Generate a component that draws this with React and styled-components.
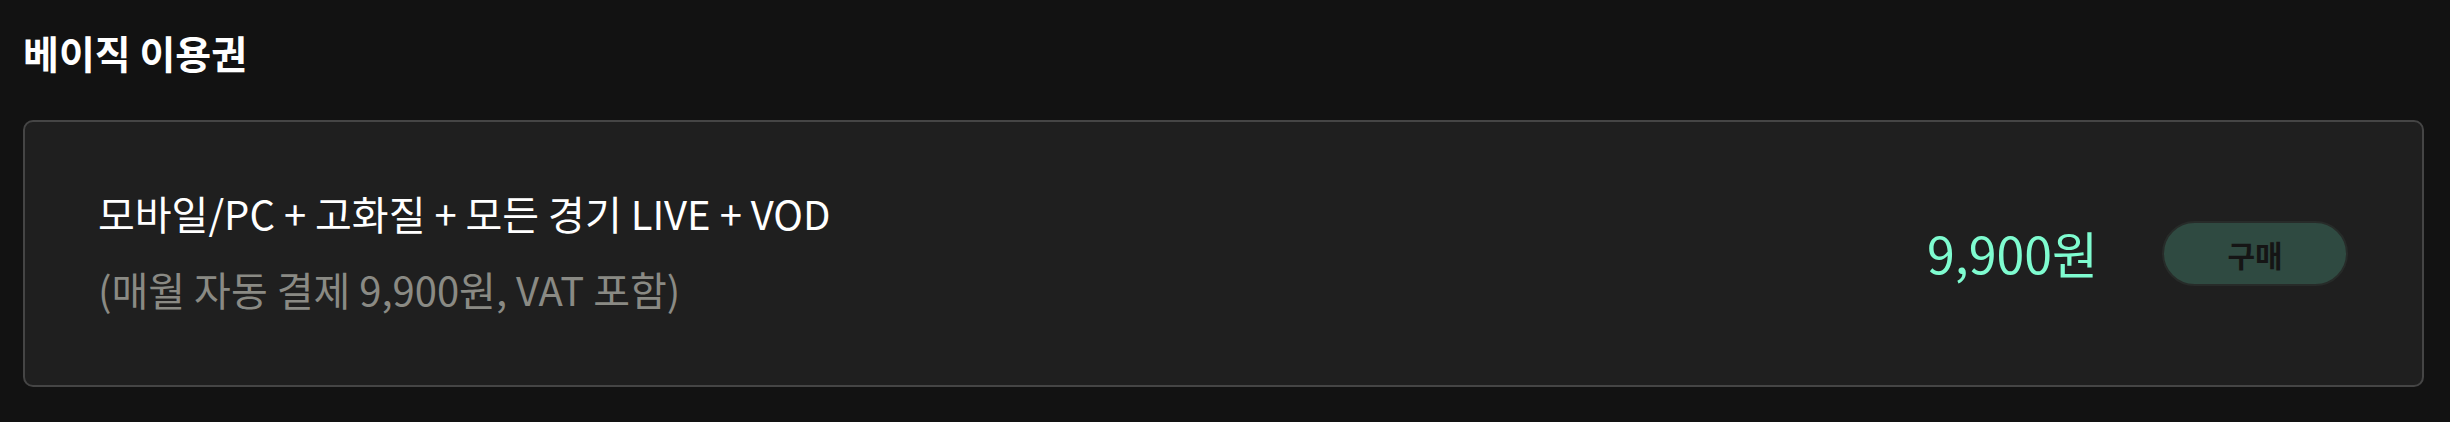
import React from "react";
import styled, { createGlobalStyle } from "styled-components";

const GlobalStyle = createGlobalStyle`
  html, body {
    margin: 0;
    padding: 0;
    background: #121212;
  }
  body {
    font-family: "Noto Sans CJK KR", "Noto Sans", sans-serif;
    color: #fff;
  }
`;

const PageWrapper = styled.div`
  padding: 26px 26px 34px 23px;
`;

const Title = styled.h2`
  margin: 0 0 42px;
  font-size: 39px;
  line-height: 52px;
  font-weight: 700;
  color: #fff;
`;

const PlanCard = styled.div`
  box-sizing: border-box;
  height: 267px;
  display: flex;
  align-items: center;
  padding: 0 74px 0 73px;
  background: #1f1f1f;
  border: 2px solid #454545;
  border-radius: 10px;
`;

const PlanInfo = styled.div`
  flex: 1;
  display: flex;
  flex-direction: column;
  gap: 24px;
  padding-bottom: 6px;
`;

const PlanName = styled.div`
  font-size: 40px;
  line-height: 52px;
  color: #fff;
`;

const PlanNote = styled.div`
  font-size: 40px;
  line-height: 52px;
  color: #8a8a84;
`;

const Price = styled.div`
  font-size: 50px;
  line-height: 60px;
  color: #7ffcd0;
  margin-right: 64px;
  padding-bottom: 4px;
`;

const BuyButton = styled.button`
  box-sizing: border-box;
  width: 186px;
  height: 65px;
  border-radius: 33px;
  border: 2px solid #272b29;
  background: #2f4a41;
  color: #151515;
  font-family: "Noto Sans CJK KR", sans-serif;
  font-size: 30px;
  font-weight: 700;
  cursor: pointer;
`;

const plan = {
  title: "베이직 이용권",
  name: "모바일/PC + 고화질 + 모든 경기 LIVE + VOD",
  note: "(매월 자동 결제 9,900원, VAT 포함)",
  price: "9,900원",
};

function App() {
  return (
    <>
      <GlobalStyle />
      <PageWrapper>
        <Title>{plan.title}</Title>
        <PlanCard>
          <PlanInfo>
            <PlanName>{plan.name}</PlanName>
            <PlanNote>{plan.note}</PlanNote>
          </PlanInfo>
          <Price>{plan.price}</Price>
          <BuyButton>구매</BuyButton>
        </PlanCard>
      </PageWrapper>
    </>
  );
}

export default App;
